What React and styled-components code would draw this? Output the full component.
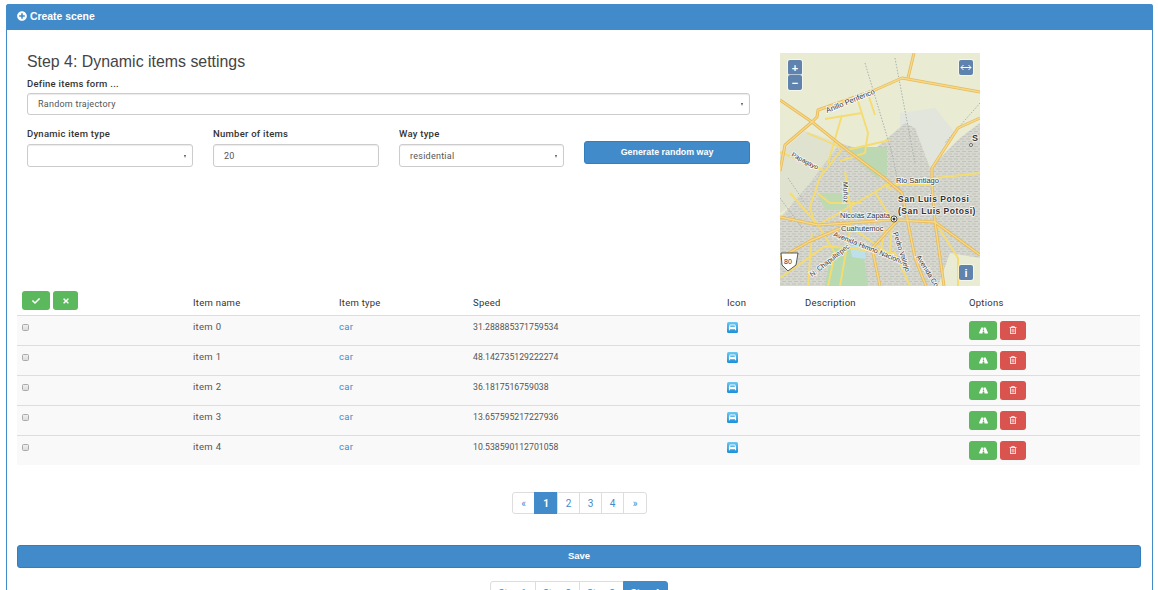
import React from "react";
import styled, { createGlobalStyle } from "styled-components";
import { FaPlusCircle, FaCheck, FaTimes, FaRoad, FaRegTrashAlt } from "react-icons/fa";

const Global = createGlobalStyle`
  html, body { margin: 0; padding: 0; height: 590px; overflow: hidden; background: #fff; }
  body { font-family: "Liberation Sans", Arial, sans-serif; color: #333; font-size: 9px; }
  * { box-sizing: border-box; }
`;

const Panel = styled.div`
  margin: 4px 5px 0 6px;
  border: 1px solid #428bca;
  border-bottom: 0;
  border-radius: 3px 3px 0 0;
  height: 620px;
`;
const PanelHead = styled.div`
  height: 26px;
  background: #428bca;
  color: #fff;
  font-size: 10.4px;
  font-weight: 700;
  display: flex;
  align-items: center;
  gap: 3px;
  padding: 0 0 2px 11px;
  margin: -1px -1px 0;
  border-radius: 3px 3px 0 0;
`;
const PanelBody = styled.div`
  padding: 23px 11px 0 10px;
`;
const Top = styled.div`
  display: flex;
  height: 237px;
`;
const FormCol = styled.div`
  width: 723px;
  margin-left: 10px;
`;
const Title = styled.h3`
  margin: 0;
  font-size: 15.9px;
  line-height: 18px;
  font-weight: 400;
  color: #444;
`;
const Label = styled.label`
  display: block;
  font-family: "Roboto", sans-serif;
  font-size: 9.5px;
  font-weight: 500;
  letter-spacing: 0.25px;
  line-height: 11px;
  margin-bottom: 5px;
`;
const DefineLabel = styled(Label)`
  margin-top: 7px;
  margin-bottom: 4px;
`;
const SelectBox = styled.div`
  position: relative;
  height: 22px;
  border: 1px solid #ccc;
  border-radius: 3px;
  box-shadow: inset 0 1px 1px rgba(0, 0, 0, 0.08);
  padding: 0 10px;
  display: flex;
  align-items: center;
  color: #555;
  font-family: "Roboto", sans-serif;
  font-size: 9px;
  letter-spacing: 0.25px;
  background: #fff;
`;
const Caret = styled.span`
  position: absolute;
  right: 6px;
  top: 50%;
  margin-top: -1px;
  border-left: 1.5px solid transparent;
  border-right: 1.5px solid transparent;
  border-top: 3px solid #555;
`;
const FieldRow = styled.div`
  display: flex;
  gap: 20px;
  margin-top: 13px;
  align-items: flex-start;
`;
const Field = styled.div`
  width: ${(p) => p.$w}px;
`;
const TallBox = styled(SelectBox)`
  height: 23px;
`;
const BlueButton = styled.button`
  display: block;
  background: #428bca;
  color: #fff;
  border: 1px solid #357ebd;
  border-radius: 3px;
  font-family: "Liberation Sans", sans-serif;
  font-weight: 700;
  font-size: 8.9px;
  padding: 0;
`;
const GenerateButton = styled(BlueButton)`
  width: 166px;
  height: 23px;
  margin-top: 13px;
  padding-bottom: 2px;
`;
const MapWrap = styled.div`
  position: relative;
  width: 200px;
  height: 233px;
  margin-left: 30px;
  overflow: hidden;
  background: #e9ebd3;
`;
const MapBtn = styled.div`
  position: absolute;
  left: ${(p) => p.$x}px;
  top: ${(p) => p.$y}px;
  width: 14px;
  height: 15px;
  background: #5f83ad;
  border-radius: 2px;
  color: #fff;
  display: flex;
  align-items: center;
  justify-content: center;
  font: 700 11px/14px "Liberation Sans", sans-serif;
  box-shadow: 0 0 0 1px rgba(255, 255, 255, 0.55);
`;

const Table = styled.table`
  width: 1123px;
  border-collapse: collapse;
  table-layout: fixed;
`;
const Th = styled.th`
  height: 25px;
  padding: 0 5px 7px;
  text-align: left;
  vertical-align: bottom;
  font-family: "Roboto", sans-serif;
  font-size: 9.5px;
  font-weight: 400;
  letter-spacing: 0.25px;
  line-height: 11px;
  border-bottom: 1px solid #ddd;
  position: relative;
  color: #333;
`;
const Tr = styled.tr`
  background: #f9f9f9;
`;
const Td = styled.td`
  height: 30px;
  padding: 5px;
  vertical-align: top;
  font-family: "Roboto", sans-serif;
  font-size: 9.5px;
  letter-spacing: 0.3px;
  line-height: 12px;
  color: #555;
  border-top: 1px solid #ddd;
  tr:first-child > & { border-top: 0; }
`;
const SpeedText = styled.span`
  font-size: 8.7px;
  letter-spacing: 0;
`;
const CarLink = styled.a`
  color: #428bca;
`;
const CheckBox = styled.span`
  display: block;
  width: 7px;
  height: 7px;
  margin-top: 3px;
  border: 1px solid #aaa;
  border-radius: 1.5px;
  background: linear-gradient(#eee, #ddd);
`;
const IconSlot = styled.div`
  margin-top: 1px;
  height: 11px;
`;
const HeadBtns = styled.div`
  position: absolute;
  left: 5px;
  top: 1px;
  display: flex;
  gap: 3px;
`;
const SmallBtn = styled.span`
  display: flex;
  align-items: center;
  justify-content: center;
  width: ${(p) => p.$w}px;
  height: 19px;
  border-radius: 3px;
  color: #fff;
  font-size: 8px;
  background: ${(p) => (p.$red ? "#d9534f" : "#5cb85c")};
`;
const BtnGroup = styled.div`
  display: flex;
  gap: 3px;
`;
const Pager = styled.ul`
  list-style: none;
  display: flex;
  justify-content: center;
  margin: ${(p) => p.$m};
  padding: 0 0 0 ${(p) => p.$shift || 0}px;
`;
const PageItem = styled.li`
  width: ${(p) => p.$w}px;
  height: ${(p) => p.$h}px;
  margin-left: -1px;
  display: flex;
  align-items: center;
  justify-content: center;
  border: 1px solid ${(p) => (p.$active ? "#428bca" : "#ddd")};
  background: ${(p) => (p.$active ? "#428bca" : "#fff")};
  color: ${(p) => (p.$active ? "#fff" : "#428bca")};
  font-family: "Roboto", sans-serif;
  font-size: 10px;
  font-weight: ${(p) => (p.$active ? 700 : 400)};
  &:first-child { border-radius: 3px 0 0 3px; }
  &:last-child { border-radius: 0 3px 3px 0; }
`;
const SaveButton = styled(BlueButton)`
  width: 1124px;
  height: 23px;
  font-size: 9.5px;
  padding-bottom: 2px;
`;

const CarIcon = () => (
  <svg width="11" height="11" viewBox="0 0 11 11">
    <defs>
      <linearGradient id="carbg" x1="0" y1="0" x2="0" y2="1">
        <stop offset="0" stopColor="#6cc8f0" />
        <stop offset="1" stopColor="#1d8fd8" />
      </linearGradient>
    </defs>
    <rect width="11" height="11" rx="1.5" fill="url(#carbg)" />
    <path d="M2.8 2.6h5.4l.9 2.6v3H8V7.2H3v1H1.9v-3z" fill="#fff" />
    <rect x="3.2" y="3.4" width="4.6" height="1.6" fill="#5cb6ea" />
  </svg>
);

const MapText = styled.text`
  font-family: "Liberation Sans", sans-serif;
  font-size: ${(p) => p.$s || 7.5}px;
  font-weight: ${(p) => (p.$b ? 700 : 400)};
  letter-spacing: ${(p) => (p.$b ? "0.5px" : "0")};
  fill: #333;
  paint-order: stroke;
  stroke: rgba(255, 255, 255, 0.85);
  stroke-width: 1.6px;
`;

const bigRoads = [
  "M134 0 L128 25",
  "M200 39 L122 25 L95 37 L38 57 L37 64 L32 69 L5 92 L0 118",
  "M0 47 L32 69 L67 97 L103 124 L122 140 L135 205 L146 233",
  "M200 65 L178 75 L152 115 L152 132 L155 169 L164 233",
  "M117 167 L155 169 L200 202",
  "M0 164 L38 172 L112 167",
  "M0 205 L30 188 L68 172",
  "M100 233 L92 195 L118 167",
];
const thinRoads = [
  "M105 132 L152 132",
  "M63 95 L40 124 L30 154 L35 172",
  "M62 62 L48 110",
  "M78 48 L88 80 L85 100 L60 108",
  "M89 44 L95 62",
  "M27 80 L67 97 L110 87",
  "M45 66 L82 60",
  "M0 99 L43 117",
  "M38 172 L95 139 L105 132 L112 137",
  "M65 118 L72 165 L60 233",
  "M10 140 L38 172 L55 200 L48 233",
  "M0 225 L45 193 L115 200 L130 233",
  "M68 172 L115 205",
  "M32 180 L28 233",
  "M95 139 L112 167 L110 200",
  "M155 169 L178 205 L178 233",
  "M155 125 L200 120",
  "M37 140 L50 150 L82 150",
  "M85 175 L105 178 L100 200",
];
const railLines = ["M85 10 L112 100 L125 165", "M115 5 L135 110", "M200 50 L165 90", "M0 145 L22 175", "M8 125 L25 150"];

const MapPic = () => (
  <svg width="200" height="233" viewBox="0 0 200 233" style={{ display: "block" }}>
    <defs>
      <pattern id="block" width="6" height="5" patternUnits="userSpaceOnUse">
        <rect width="6" height="5" fill="#d6d7ce" />
        <path d="M0 1h4M2 3.5h4" stroke="#c2c3bc" strokeWidth="1" />
      </pattern>
      <filter id="soft"><feGaussianBlur stdDeviation="0.6" /></filter>
    </defs>
    <rect width="200" height="233" fill="#e9ebd3" />
    <path d="M120 60 L155 55 L175 80 L150 115 L120 110z" fill="#e1e5dc" />
    <path d="M0 100 L25 78 L60 90 L40 130 L0 160z" fill="#dfe2cf" />
    <g filter="url(#soft)">
      <path d="M30 130 L60 90 L90 100 L125 70 L135 75 L150 115 L180 85 L200 70 V205 L170 200 L158 233 H0 V165z" fill="url(#block)" />
      <path d="M63 94 L107 94 L107 122 L97 125z" fill="#bcd8b2" />
      <path d="M37 140 L67 140 L67 157 L45 157z" fill="#bfd9b3" />
      <path d="M52 195 L82 190 L88 233 H45z" fill="#b7dab2" />
      <path d="M70 193 L85 193 L85 206 L72 204z" fill="#bde0ea" />
      {railLines.map((d, i) => (
        <path key={i} d={d} fill="none" stroke="#aab0b0" strokeWidth="1" strokeDasharray="1.5 1.5" />
      ))}
      {thinRoads.map((d, i) => (
        <path key={i} d={d} fill="none" stroke="#f5dc70" strokeWidth="1.9" strokeLinejoin="round" />
      ))}
      {bigRoads.map((d, i) => (
        <path key={i} d={d} fill="none" stroke="#e8b95a" strokeWidth="3" strokeLinejoin="round" />
      ))}
      {bigRoads.map((d, i) => (
        <path key={i} d={d} fill="none" stroke="#f5d987" strokeWidth="1.4" strokeLinejoin="round" />
      ))}
    </g>
    <MapText transform="translate(47 60) rotate(-22)">Anillo Periferico</MapText>
    <MapText transform="translate(11 103) rotate(28)" $s={6.5}>Papagayo</MapText>
    <MapText transform="translate(63 129) rotate(88)" $s={7}>Muñoz</MapText>
    <MapText x="116" y="130">Rio Santiago</MapText>
    <MapText x="60" y="165">Nicolás Zapata</MapText>
    <MapText x="61" y="178">Cuahutemoc</MapText>
    <MapText transform="translate(53 183) rotate(22)" $s={7}>Avenida Himno Nacional</MapText>
    <MapText transform="translate(113 180) rotate(72)" $s={7}>Pedro Vallejo</MapText>
    <MapText transform="translate(136 204) rotate(58)" $s={7}>Avenida Co</MapText>
    <MapText transform="translate(32 224) rotate(-38)" $s={7}>N. Chapultepec</MapText>
    <MapText x="118" y="149" $s={8.5} $b>San Luis Potosi</MapText>
    <MapText x="118" y="161" $s={8.5} $b>(San Luis Potosi)</MapText>
    <MapText x="192" y="88" $s={9} $b>S</MapText>
    <circle cx="191" cy="92" r="1.5" fill="#fff" stroke="#333" strokeWidth="0.7" />
    <circle cx="114" cy="166" r="3" fill="#fff" stroke="#333" strokeWidth="0.8" />
    <circle cx="114" cy="166" r="1.5" fill="#333" />
    <path d="M1 200 H18 L16 212 L8 218 L2 212z" fill="#fff" stroke="#333" strokeWidth="0.8" />
    <MapText x="4" y="211" $s={7}>80</MapText>
  </svg>
);

const ExpandIcon = () => (
  <svg width="12" height="7" viewBox="0 0 12 7">
    <path d="M1 3.5h10M3.5 1L1 3.5 3.5 6M8.5 1L11 3.5 8.5 6" fill="none" stroke="#fff" strokeWidth="1" />
  </svg>
);

const items = [
  ["item 0", "31.288885371759534"],
  ["item 1", "48.142735129222274"],
  ["item 2", "36.1817516759038"],
  ["item 3", "13.657595217227936"],
  ["item 4", "10.538590112701058"],
];

export default function App() {
  return (
    <>
      <Global />
      <Panel>
        <PanelHead><FaPlusCircle size={10} /> Create scene</PanelHead>
        <PanelBody>
          <Top>
            <FormCol>
              <Title>Step 4: Dynamic items settings</Title>
              <DefineLabel>Define items form ...</DefineLabel>
              <SelectBox>Random trajectory<Caret /></SelectBox>
              <FieldRow>
                <Field $w={166}>
                  <Label>Dynamic item type</Label>
                  <TallBox><Caret /></TallBox>
                </Field>
                <Field $w={166}>
                  <Label>Number of items</Label>
                  <TallBox>20</TallBox>
                </Field>
                <Field $w={165}>
                  <Label>Way type</Label>
                  <TallBox>residential<Caret /></TallBox>
                </Field>
                <GenerateButton>Generate random way</GenerateButton>
              </FieldRow>
            </FormCol>
            <MapWrap>
              <MapPic />
              <MapBtn $x={8} $y={7}>+</MapBtn>
              <MapBtn $x={8} $y={22}>−</MapBtn>
              <MapBtn $x={179} $y={7}><ExpandIcon /></MapBtn>
              <MapBtn $x={179} $y={212}>i</MapBtn>
            </MapWrap>
          </Top>
          <Table>
            <colgroup>
              <col style={{ width: 171 }} />
              <col style={{ width: 146 }} />
              <col style={{ width: 134 }} />
              <col style={{ width: 254 }} />
              <col style={{ width: 78 }} />
              <col style={{ width: 164 }} />
              <col style={{ width: 176 }} />
            </colgroup>
            <thead>
              <tr>
                <Th>
                  <HeadBtns>
                    <SmallBtn $w={28}><FaCheck /></SmallBtn>
                    <SmallBtn $w={25}><FaTimes /></SmallBtn>
                  </HeadBtns>
                </Th>
                <Th>Item name</Th>
                <Th>Item type</Th>
                <Th>Speed</Th>
                <Th>Icon</Th>
                <Th>Description</Th>
                <Th>Options</Th>
              </tr>
            </thead>
            <tbody>
              {items.map(([name, speed]) => (
                <Tr key={name}>
                  <Td><CheckBox /></Td>
                  <Td>{name}</Td>
                  <Td><CarLink>car</CarLink></Td>
                  <Td><SpeedText>{speed}</SpeedText></Td>
                  <Td><IconSlot><CarIcon /></IconSlot></Td>
                  <Td />
                  <Td>
                    <BtnGroup>
                      <SmallBtn $w={28}><FaRoad size={9} /></SmallBtn>
                      <SmallBtn $w={26} $red><FaRegTrashAlt /></SmallBtn>
                    </BtnGroup>
                  </Td>
                </Tr>
              ))}
            </tbody>
          </Table>
          <Pager $m="27px 0 31px" $shift={2}>
            <PageItem $w={23} $h={22}>«</PageItem>
            <PageItem $w={24} $h={22} $active>1</PageItem>
            <PageItem $w={23} $h={22}>2</PageItem>
            <PageItem $w={23} $h={22}>3</PageItem>
            <PageItem $w={23} $h={22}>4</PageItem>
            <PageItem $w={24} $h={22}>»</PageItem>
          </Pager>
          <SaveButton>Save</SaveButton>
          <Pager $m="13px 0 0">
            <PageItem $w={46} $h={24}>Step 1</PageItem>
            <PageItem $w={45} $h={24}>Step 2</PageItem>
            <PageItem $w={45} $h={24}>Step 3</PageItem>
            <PageItem $w={45} $h={24} $active>Step 4</PageItem>
          </Pager>
        </PanelBody>
      </Panel>
    </>
  );
}
